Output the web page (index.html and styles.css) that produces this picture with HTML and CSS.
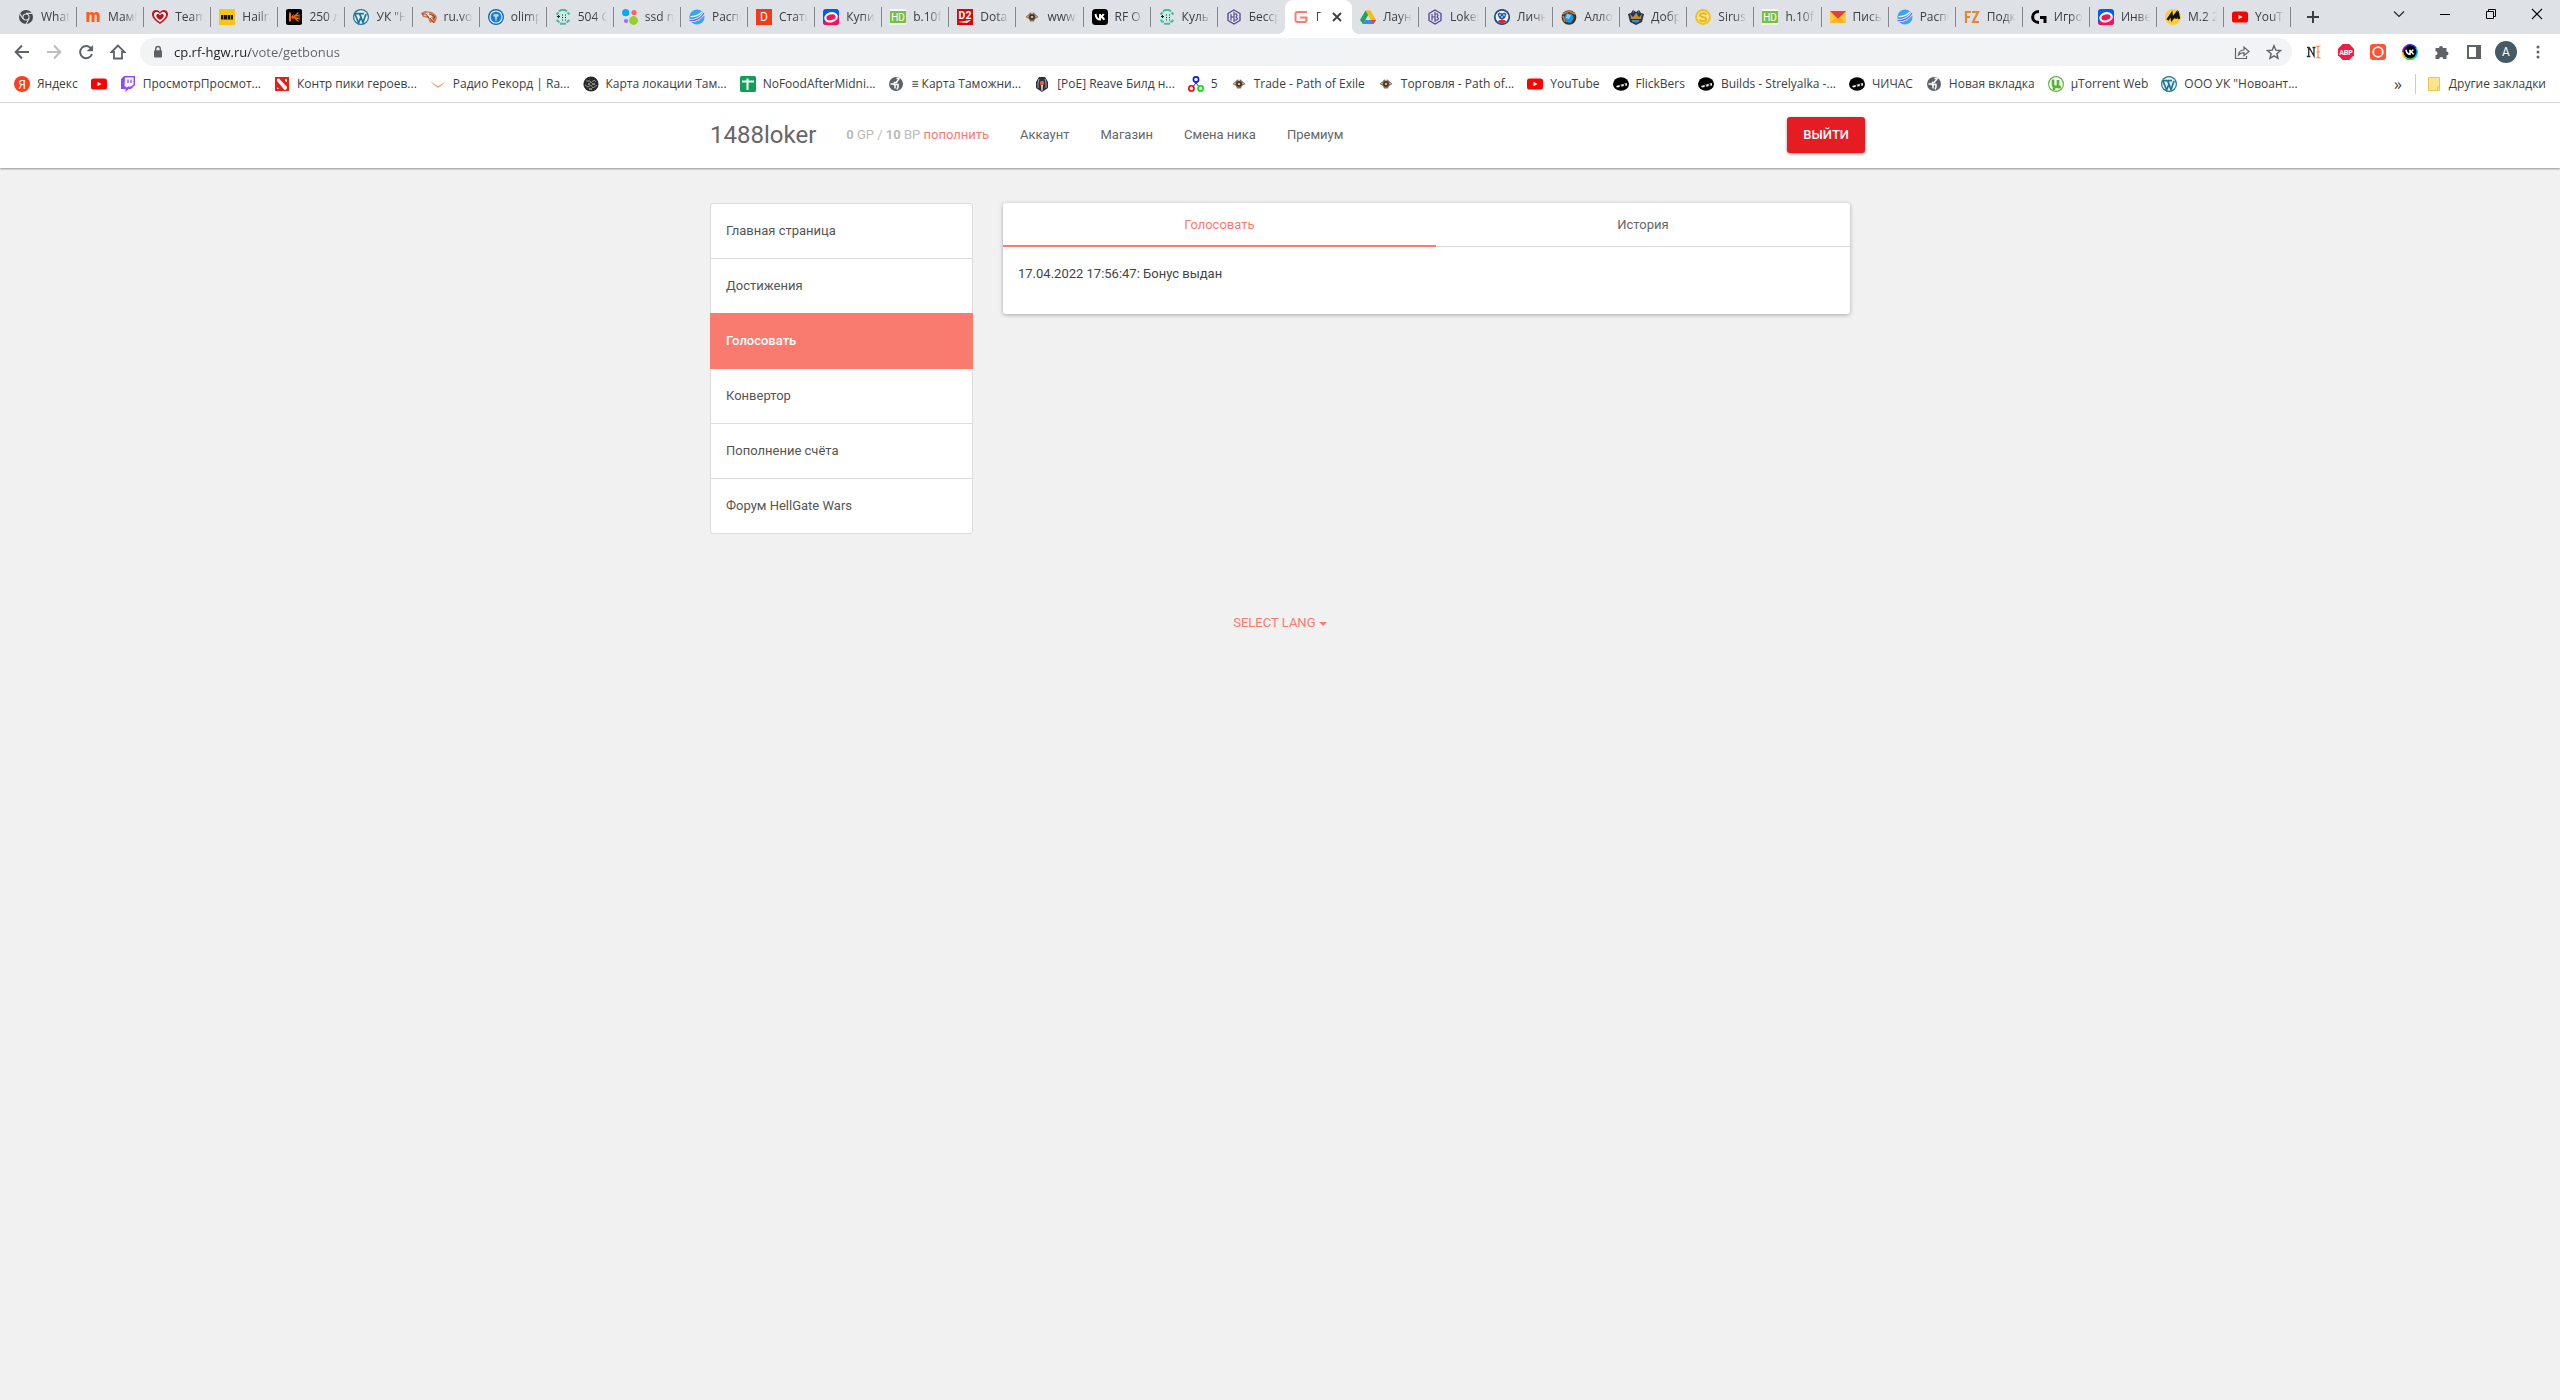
FILE: index.html
```html
<!DOCTYPE html>
<html lang="ru">
<head>
    <meta charset="UTF-8">
    <meta name="viewport" content="width=device-width, initial-scale=1.0">
    <title>Панель управления</title>
    <link rel="stylesheet" href="styles.css">
</head>
<body>
    <!-- icon sprite -->
    <svg class="sprite" aria-hidden="true">
        <symbol id="chrome" viewBox="0 0 16 16"><circle cx="8" cy="8" r="7" fill="#46494d"/><circle cx="8" cy="8" r="3.6" fill="#dee1e6"/><circle cx="8" cy="8" r="2.5" fill="#46494d"/><path d="M8 4.4h6.4M4.9 9.8 1.8 4.6M11.1 9.8 8 15" stroke="#dee1e6" stroke-width="1.1"/></symbol>
        <symbol id="mamba" viewBox="0 0 16 16"><path d="M1.4 13V3h2.8v1C6 2.500 8 2.800 8.900 4.100c1.600-1.800 5.700-1.600 5.700 2V13h-2.900V6.800c0-1.700-2.200-1.700-2.200 0V13H6.600V6.800c0-1.700-2.300-1.700-2.300 0V13z" fill="#ff5c1a"/></symbol>
        <symbol id="heart" viewBox="0 0 16 16"><path d="M8 15C2 11 0 8 0 5c0-4.500 5.500-5.500 8-2 2.500-3.500 8-2.500 8 2 0 3-2 6-8 10z" fill="#c41219"/><path d="M8 13C3.500 10 2 8 2 5.500c0-3 4-3.500 6-.5 2-3 6-2.500 6 .5C14 8 12.500 10 8 13z" fill="#fff"/><path d="M8 11C5 9 4.200 8 4.200 6.500 4.200 4.500 7 4.300 8 6.300c1-2 3.800-1.800 3.800.2C11.800 8 11 9 8 11z" fill="#c41219"/></symbol>
        <symbol id="imdb" viewBox="0 0 16 16"><path d="M0 0h16v16H0z" fill="#f5c518"/><path d="M2 6h12v4.500H2z" fill="#111"/><path d="M4.500 6v4.500M8.500 6v4.500M11.500 6v4.500" stroke="#f5c518" stroke-width=".6"/></symbol>
        <symbol id="ke" viewBox="0 0 16 16"><rect width="16" height="16" rx="2"/><path d="M3 3.500h2v9H3zM5 8l2.500-3v6z" fill="#ff6a13"/><path d="m7.500 8 5-4.500M7.500 8l5 4.500M8 8h6M8 7l6-1M8 9l6 1" stroke="#ff6a13" stroke-width="1.100"/></symbol>
        <symbol id="wp" viewBox="0 0 16 16"><circle cx="8" cy="8" r="8" fill="#21759b"/><circle cx="8" cy="8" r="6.800" fill="#e8f1f5"/><path d="m2 5 3.600 9L8 8 6.500 4M6.500 4.500 10 13.500l3-8.500M1.800 4.600h5M6 4.600h5" fill="none" stroke="#21759b" stroke-width="1.700"/></symbol>
        <symbol id="volcano" viewBox="0 0 16 16"><path d="M0 4 4 2l7 1 4 3 1 3-2 5-3-1-2 1-2-5-5-1z" fill="#d8794c"/><path d="m2 4.500 5-1 5 3-2 2 3 3-3-.5-3-4-4-.5z" fill="#f6e6c4"/><path d="M1 5h4l3 4M8 5l5 2M9 9l4 5M14 7l-2 4" fill="none" stroke="#5e3b46" stroke-width=".9"/></symbol>
        <symbol id="olimp" viewBox="0 0 16 16"><circle cx="8" cy="8" r="8" fill="#1767b5"/><circle cx="8" cy="8" r="6.600" fill="#fff"/><circle cx="8" cy="8" r="5.500" fill="#1b7cd1"/><path d="M6 5h4l1 2-2 1-.5 4h-1L7 8 5 7z" fill="#a8d8ff"/></symbol>
        <symbol id="cult" viewBox="0 0 16 16"><path d="M4 3h8v10H4zM1 6h14v5H1z" fill="#c9ece5"/><path d="M4 2.500 6 1h4l2 1.500M12.500 3.500 14.500 5.500M3.500 3.500 1.500 5.500M1.500 11l3 2.500M14.500 11l-3 2.500M5 14.800h6" fill="none" stroke="#4eb6a4" stroke-width="1.900"/><path d="M2 7.500h3M3.500 6v3M7 6h1M10 6h1M7 8.500h1M10 8.500h1M7 11h1M10 11h1" stroke="#222" stroke-width="1"/></symbol>
        <symbol id="avito" viewBox="0 0 16 16"><circle cx="3.700" cy="3.700" r="3.600" fill="#00aaff"/><circle cx="12" cy="3.600" r="2.600" fill="#ff6163"/><circle cx="4" cy="12" r="2.100" fill="#a169f7"/><circle cx="11.600" cy="11.500" r="4.400" fill="#97cf26"/></symbol>
        <symbol id="planet" viewBox="0 0 16 16"><circle cx="8" cy="8" r="7.600" fill="#38a5f5"/><path d="M1.500 7.500C6 8 11 5.500 13 3" fill="none" stroke="#e8f4ff" stroke-width="1.300"/><path d="M.5 11.500C6 12.500 13 8.500 15 4" fill="none" stroke="#e8f4ff" stroke-width="3"/><path d="M.5 11.500C6 12.500 13 8.500 15 4" fill="none" stroke="#8b5be8" stroke-width="1.300"/></symbol>
        <symbol id="d" viewBox="0 0 16 16"><path d="M0 0h16v16H0z" fill="#f03a1c"/><text x="8" y="12" class="glyph white" font-size="12">D</text></symbol>
        <symbol id="ozon" viewBox="0 0 16 16"><rect width="16" height="16" rx="3" fill="#005bff"/><path d="M0 13 16 7v6a3 3 0 0 1-3 3H3a3 3 0 0 1-3-3z" fill="#f91155"/><ellipse cx="8" cy="8.300" rx="5.800" ry="4" transform="rotate(-15 8 8.300)" fill="#f91155" stroke="#fff" stroke-width="2.200"/></symbol>
        <symbol id="hd" viewBox="0 0 16 16"><path d="M0 0h16v16H0z" fill="#f4f8ee"/><path d="M0 2h16v12H0z" fill="#77c043"/><text x="8" y="12" class="glyph white" font-size="10">HD</text></symbol>
        <symbol id="d2" viewBox="0 0 16 16"><path d="M0 0h16v16H0z" fill="#cf0a0f"/><text x="8" y="9.500" class="glyph white bold" font-size="10.500">D2</text><path d="m1 13 13-2-4 3z" fill="#fff"/></symbol>
        <symbol id="poe" viewBox="0 0 16 16"><path d="m1.500 8 3.500-3 1-1.500L8 4l2-.5L11 5l3.500 3L11 10l-1 2.500H6L5 10z" fill="#85705a"/><circle cx="8" cy="8" r="2.700" fill="#3a2a22"/><circle cx="8" cy="8" r="1.300" fill="#d9b98c"/><path d="m3 8 2-1M11 7l2 1M7 4.500h2" stroke="#cbb798"/></symbol>
        <symbol id="vk" viewBox="0 0 16 16"><rect width="16" height="16" rx="3.500"/><path d="M3.500 5c.5 3.500 2 5.600 4.500 5.600V5M8 7.800c2-.2 3-1.300 3.700-2.800M8 7.800c2.500.2 3.500 1.400 4.200 3" fill="none" stroke="#fff" stroke-width="1.900"/></symbol>
        <symbol id="hexa" viewBox="0 0 16 16"><path d="m8 1 6 3.500v7L8 15l-6-3.500v-7z" fill="#e4e2f2" stroke="#4d4393" stroke-width="1.300"/><path d="M5 5v6.500M5 8h3M8 3v10M8 5h2.500l.5 1.500L10 8l1.500 1.500L10.500 11H8" fill="none" stroke="#4d4393" stroke-width="1.100"/></symbol>
        <symbol id="g" viewBox="0 0 16 16"><path d="M14 3H4.500C3 3 2.500 4 2.500 5v6c0 1.500 1 2 2 2h7c1.300 0 2-.7 2-2V8.500H7" fill="none" stroke="#f97b70" stroke-width="2"/></symbol>
        <symbol id="drive" viewBox="0 0 16 16"><path d="M5.500 1.500h5L16 11h-5z" fill="#fbbc04"/><path d="m5.500 1.500 2.700 4.600L3 15 0 11z" fill="#1ea362"/><path d="M5 11h11l-2.700 4H2.500z" fill="#4285f4"/><path d="M11 11h5l-2.700 4z" fill="#ea4335"/></symbol>
        <symbol id="fifa" viewBox="0 0 16 16"><circle cx="8" cy="8" r="7.200" fill="#f4f4f4" stroke="#1c4e8c" stroke-width="1.700"/><path d="M3.500 12.500a6.500 6.500 0 0 0 9 0l-2-1.500h-5z" fill="#d9262e"/><path d="m3.500 5 2-1.500 2.500 1 2.500-1 2 1.500-1.500 4L8 11 5 9z" fill="#24599d"/><path d="M5 6h2M9 6h2M8 7v2" stroke="#fff"/></symbol>
        <symbol id="allods" viewBox="0 0 16 16"><circle cx="8" cy="8.500" r="7.300" fill="#4b2c19"/><path d="m3 8 3-4 5 1 2 4-3 5-5-1z" fill="#1a94e8"/><path d="m6 5 4 1-2 4-3-1z" fill="#7cd3ff"/><path d="m2 5 6-3 6 3M2 7l2 6" fill="none" stroke="#c98032" stroke-width="1.500"/></symbol>
        <symbol id="royal" viewBox="0 0 16 16"><path d="m0 5 3-1 2-3 3 2 3-2 2 3 3 1-2 8-6 3-6-3z" fill="#27344c"/><path d="m2 5 3 3 3-4 3 4 3-3-1 5H3z" fill="#c18a31"/><path d="M3 11h10l-5 4z" fill="#255aa8"/><path d="M5 3h1M10 3h1M8 5h1M4 12h7" stroke="#62c7c2"/></symbol>
        <symbol id="sirus" viewBox="0 0 16 16"><circle cx="8" cy="8" r="7" fill="#f9e48e" stroke="#eebf22" stroke-width="1.800"/><path d="M11.500 5.500C9 3.500 5 4 5 6.300c0 2.500 6.300 1 6.300 3.700C11.300 12.500 7 13 4.500 10.800" fill="none" stroke="#e5b415" stroke-width="1.800"/></symbol>
        <symbol id="mail" viewBox="0 0 16 16"><path d="M0 2h16v12H0z" fill="#ffcb3d"/><path d="M0 2h16L8 10z" fill="#f4392f"/><path d="m0 14 6-6 2 2 2-2 6 6z" fill="#ffb525"/></symbol>
        <symbol id="fz" viewBox="0 0 16 16"><path d="M7 3H2v11M2 8h4M8 3h6L9 13h6" fill="none" stroke="#e08936" stroke-width="2.200"/></symbol>
        <symbol id="logi" viewBox="0 0 16 16"><path d="M8 2.500C-.5 2.500-.5 13.500 8 13.500M9 8.500h5V14" fill="none" stroke="#000" stroke-width="3"/></symbol>
        <symbol id="market" viewBox="0 0 16 16"><circle cx="8" cy="8" r="8" fill="#fc3"/><path d="m2.500 11 4-6L7 10l4-5-.5 4.500L13 5l1 5" fill="none" stroke="#111" stroke-width="2.500"/></symbol>
        <symbol id="youtube" viewBox="0 0 16 16"><rect y="2.500" width="16" height="11" rx="2.600" fill="#f00"/><path d="m6.500 5.700 4 2.300-4 2.300z" fill="#fff"/></symbol>
        <symbol id="yandex" viewBox="0 0 16 16"><circle cx="8" cy="8" r="8" fill="#fc3f1d"/><text x="8" y="12.500" class="glyph white" font-size="12">Я</text></symbol>
        <symbol id="twitch" viewBox="0 0 16 16"><path d="M4 0h11v9l-4 4H8.500L5.500 16v-3H1V3z" fill="#9147ff"/><path d="M5 1.500h8.500v7l-2.500 2H8L6.500 12v-1.500H4.500z" fill="#fff"/><path d="M8 3.500v3.500M11 3.500v3.500" stroke="#9147ff" stroke-width="1.300"/></symbol>
        <symbol id="dota" viewBox="0 0 16 16"><path d="M1 1h14v14H1z" fill="#e42019"/><path d="m3 3 2-.5 8 8.500-.5 2.500-2 .5L3 5zM11 3l2 .5V6l-2-1zM3 11l2 2H3z" fill="#fff"/></symbol>
        <symbol id="record" viewBox="0 0 16 16"><path d="m0 5 6 4 2 1 2-1 6-4-5 5-3 2-3-2z" fill="#f0a98b"/></symbol>
        <symbol id="photo" viewBox="0 0 16 16"><circle cx="8" cy="8" r="7.600" fill="#292929"/><path d="M3 5h4l1 2 3-3 2 2M2 9l3 2 3-2 2 3 4-3" fill="none" stroke="#96928b"/><path d="M5 8h2M9 8h3M6 13h3" stroke="#ddd"/></symbol>
        <symbol id="sheet" viewBox="0 0 16 16"><rect width="16" height="16" rx="1.500" fill="#129d58"/><path d="M2 5.500h12M7.500 2.500V14" stroke="#fff" stroke-width="2"/></symbol>
        <symbol id="globe" viewBox="0 0 16 16"><circle cx="8" cy="8" r="7" fill="#5f6368"/><path d="M8.500 2.500H11c0 2-2.500 2-2.500 4H6.500v2H10v2.500l-1 2.500M2.500 8h3l1.500 1.500v3" fill="none" stroke="#fff" stroke-width="1.500"/></symbol>
        <symbol id="ship" viewBox="0 0 16 16"><path d="M5 1h6l3 5v6l-3 2-3 2-3-2-3-2V6z" fill="#332f39"/><path d="M5 3 4 7v5M11 3l1 4v5" fill="none" stroke="#aaa5ae"/><circle cx="8" cy="7" r="2.200" fill="#d86742"/><path d="M7 9h2l-.5 6h-1z" fill="#ddd"/></symbol>
        <symbol id="rgb" viewBox="0 0 16 16"><path d="m8 7-4 5M8 7l4 5" stroke="#333"/><g fill="#fff" stroke-width="1.600"><circle cx="8" cy="3.500" r="2.600" stroke="#11f"/><circle cx="3.400" cy="12.400" r="2.600" stroke="#f00"/><circle cx="12.600" cy="12.400" r="2.600" stroke="#0d0"/></g></symbol>
        <symbol id="ninja" viewBox="0 0 16 16"><ellipse cx="8" cy="8" rx="8" ry="6.800"/><path d="M3 10 14 7v2.500L4 11.500z" fill="#f2f2f2"/><circle cx="7.500" cy="9.900" r="1"/><circle cx="11.500" cy="8.900" r="1"/></symbol>
        <symbol id="utorrent" viewBox="0 0 16 16"><circle cx="8" cy="8" r="7.400" fill="#fff" stroke="#62b544" stroke-width="1.200"/><path d="M5 3.500v5c0 3 4.500 3 5.500.5M10 4v5.500c0 1.500 1 2 3 1.500M6 10v4" fill="none" stroke="#58b531" stroke-width="2.700"/></symbol>
        <symbol id="folder" viewBox="0 0 16 16"><path d="M2.500 1.500h11v9.800h-2V14.500h-9z" fill="#ffe58f" stroke="#edc64b"/><path d="M11.500 14.500v-3.700h2v3.700z" fill="#ffe58f" stroke="#edc64b"/></symbol>
        <symbol id="back" viewBox="0 0 16 16"><path d="M15 8H2M8 1.500 1.700 8 8 14.500" fill="none" stroke="currentColor" stroke-width="2"/></symbol>
        <symbol id="forward" viewBox="0 0 16 16"><path d="M1 8h13M8 1.500 14.300 8 8 14.500" fill="none" stroke="currentColor" stroke-width="2"/></symbol>
        <symbol id="reload" viewBox="0 0 16 16"><path d="M13.300 4.700A6.100 6.100 0 1 0 14 10" fill="none" stroke="currentColor" stroke-width="2"/><path d="M15 1v6.300H8.700z" fill="currentColor"/></symbol>
        <symbol id="home" viewBox="0 0 16 16"><path d="M8 1.500 1.500 8H4v6.500h8V8h2.500z" fill="none" stroke="currentColor" stroke-width="1.800"/></symbol>
        <symbol id="lock" viewBox="0 0 16 16"><rect x="4" y="6.300" width="8" height="7.200" rx="1" fill="currentColor"/><path d="M5.700 7V4.800a2.300 2.300 0 0 1 4.600 0V7" fill="none" stroke="currentColor" stroke-width="1.400"/></symbol>
        <symbol id="share" viewBox="0 0 16 16"><path d="M1.500 4v10.500h11V12M4.500 11c.3-3.500 2.500-5 5.500-5V3l5 4.500-5 4V8.700C7.500 8.700 6 9.200 4.500 11z" fill="none" stroke="currentColor" stroke-width="1.200"/></symbol>
        <symbol id="star" viewBox="0 0 16 16"><path d="m8 1.800 1.800 4.400 4.700.4-3.600 3.100 1.100 4.600L8 11.800l-4 2.500 1.100-4.600-3.600-3.100 4.700-.4z" fill="none" stroke="currentColor" stroke-width="1.400"/></symbol>
        <symbol id="ni" viewBox="0 0 16 16"><path d="M1 3.500h2.200L8 12V3.500M2.700 3.500v9M.8 12.500h3.600M6.500 3.500h3" fill="none" stroke="#2d2d2d" stroke-width="1.300"/><path d="M10 2c1.500 0 2 .5 2 1.500v9c0 1-.5 1.500-2 1.500M14.500 2c-1.500 0-2.500.5-2.500 1.500M12 12.500c0 1 1 1.500 2.500 1.500M10.500 8H14" fill="none" stroke="#f58b4a" stroke-width="1.200"/></symbol>
        <symbol id="abp" viewBox="0 0 16 16"><path d="M4.700 0h6.600L16 4.700v6.600L11.300 16H4.700L0 11.300V4.700z" fill="#ed1e45"/><text x="8" y="10.700" class="glyph white bold" font-size="7">ABP</text></symbol>
        <symbol id="ring" viewBox="0 0 16 16"><rect width="16" height="16" rx="3" fill="#ff5334"/><circle cx="8" cy="8" r="4.800" fill="none" stroke="#fff" stroke-width="1.800"/></symbol>
        <symbol id="vkcolor" viewBox="0 0 16 16"><g fill="none" stroke-width="2"><path d="M1 8a7 7 0 0 1 3.500-6" stroke="#c0f"/><path d="M4.500 2A7 7 0 0 1 14 4.500" stroke="#32f"/><path d="M14 4.500A7 7 0 0 1 12 14" stroke="#0cf"/><path d="M12 14a7 7 0 0 1-8 0" stroke="#3d3"/><path d="M4 14a7 7 0 0 1-3-6" stroke="#fb0"/></g><circle cx="8" cy="8" r="6.500"/><path d="M4 5.700c.4 3 1.500 4.600 4 4.600V5.700M8 8c1.500-.2 2.500-1 3.300-2.300M8 8c2 .2 3 1 3.600 2.400" fill="none" stroke="#fff" stroke-width="1.600"/></symbol>
        <symbol id="puzzle" viewBox="0 0 16 16"><path d="M1.500 4H5a2 2 0 1 1 4 0h3.500v3.500a2 2 0 1 1 0 4V15H9.200a2 2 0 1 0-4 0H1.500v-3.700a2 2 0 1 0 0-4z" fill="currentColor"/></symbol>
        <symbol id="panel" viewBox="0 0 16 16"><path d="M2 2h12v12H2z" fill="none" stroke="currentColor" stroke-width="2"/><path d="M10 2h4v12h-4z" fill="currentColor"/></symbol>
        <symbol id="dots" viewBox="0 0 16 16"><g fill="currentColor"><circle cx="8" cy="3" r="1.500"/><circle cx="8" cy="8" r="1.500"/><circle cx="8" cy="13" r="1.500"/></g></symbol>
        <symbol id="plus" viewBox="0 0 16 16"><path d="M8 2v12M2 8h12" stroke="#3c4043" stroke-width="2"/></symbol>
        <symbol id="cross" viewBox="0 0 16 16"><path d="m4 4 8 8m0-8-8 8" stroke="#3c4043" stroke-width="1.800"/></symbol>
        <symbol id="chevron" viewBox="0 0 16 16"><path d="m3 5.500 5 5 5-5" fill="none" stroke="#222" stroke-width="1.100"/></symbol>
        <symbol id="minimize" viewBox="0 0 16 16"><path d="M3 8.500h10" stroke="#000"/></symbol>
        <symbol id="restore" viewBox="0 0 16 16"><path d="M3.500 5.500h7v7h-7zM5.500 5.500v-2h7v7h-2" fill="none" stroke="#000"/></symbol>
        <symbol id="close" viewBox="0 0 16 16"><path d="m3 3 10 10m0-10L3 13" stroke="#000" stroke-width="1.100"/></symbol>
    </svg>

    <div class="browser">
        <div class="tabstrip">
            <div class="tabs">
                <button class="tab"><svg><use href="#chrome"/></svg><span>What</span></button>
                <button class="tab"><svg><use href="#mamba"/></svg><span>Мамб</span></button>
                <button class="tab"><svg><use href="#heart"/></svg><span>Team</span></button>
                <button class="tab"><svg><use href="#imdb"/></svg><span>Hailra</span></button>
                <button class="tab"><svg><use href="#ke"/></svg><span>250 л</span></button>
                <button class="tab"><svg><use href="#wp"/></svg><span>УК "Н</span></button>
                <button class="tab"><svg><use href="#volcano"/></svg><span>ru.vo</span></button>
                <button class="tab"><svg><use href="#olimp"/></svg><span>olimp</span></button>
                <button class="tab"><svg><use href="#cult"/></svg><span>504 G</span></button>
                <button class="tab"><svg><use href="#avito"/></svg><span>ssd n</span></button>
                <button class="tab"><svg><use href="#planet"/></svg><span>Распи</span></button>
                <button class="tab"><svg><use href="#d"/></svg><span>Стати</span></button>
                <button class="tab"><svg><use href="#ozon"/></svg><span>Купи</span></button>
                <button class="tab"><svg><use href="#hd"/></svg><span>b.10f</span></button>
                <button class="tab"><svg><use href="#d2"/></svg><span>Dota</span></button>
                <button class="tab"><svg><use href="#poe"/></svg><span>www.</span></button>
                <button class="tab"><svg><use href="#vk"/></svg><span>RF O</span></button>
                <button class="tab"><svg><use href="#cult"/></svg><span>Культ</span></button>
                <button class="tab no-line"><svg><use href="#hexa"/></svg><span>Бесср</span></button>
                <button class="tab active"><svg><use href="#g"/></svg><span>П</span><svg><use href="#cross"/></svg></button>
                <button class="tab"><svg><use href="#drive"/></svg><span>Лаун</span></button>
                <button class="tab"><svg><use href="#hexa"/></svg><span>Loker</span></button>
                <button class="tab"><svg><use href="#fifa"/></svg><span>Личн</span></button>
                <button class="tab"><svg><use href="#allods"/></svg><span>Алло</span></button>
                <button class="tab"><svg><use href="#royal"/></svg><span>Добр</span></button>
                <button class="tab"><svg><use href="#sirus"/></svg><span>Sirus.</span></button>
                <button class="tab"><svg><use href="#hd"/></svg><span>h.10f</span></button>
                <button class="tab"><svg><use href="#mail"/></svg><span>Пись</span></button>
                <button class="tab"><svg><use href="#planet"/></svg><span>Распи</span></button>
                <button class="tab"><svg><use href="#fz"/></svg><span>Подк</span></button>
                <button class="tab"><svg><use href="#logi"/></svg><span>Игро</span></button>
                <button class="tab"><svg><use href="#ozon"/></svg><span>Инве</span></button>
                <button class="tab"><svg><use href="#market"/></svg><span>M.2 2</span></button>
                <button class="tab"><svg><use href="#youtube"/></svg><span>YouTu</span></button>
            </div>
            <button class="new-tab" aria-label="Новая вкладка"><svg><use href="#plus"/></svg></button>
            <div class="window-controls">
                <button aria-label="Поиск вкладок"><svg><use href="#chevron"/></svg></button>
                <button aria-label="Свернуть"><svg><use href="#minimize"/></svg></button>
                <button aria-label="Восстановить"><svg><use href="#restore"/></svg></button>
                <button aria-label="Закрыть"><svg><use href="#close"/></svg></button>
            </div>
        </div>

        <div class="toolbar">
            <button class="tool" aria-label="Назад"><svg><use href="#back"/></svg></button>
            <button class="tool disabled" aria-label="Вперед"><svg><use href="#forward"/></svg></button>
            <button class="tool" aria-label="Обновить"><svg><use href="#reload"/></svg></button>
            <button class="tool" aria-label="Главная"><svg><use href="#home"/></svg></button>
            <div class="omnibox">
                <svg><use href="#lock"/></svg>
                <input type="text" value="cp.rf-hgw.ru/vote/getbonus" aria-label="Адресная строка">
                <button class="tool" aria-label="Поделиться"><svg><use href="#share"/></svg></button>
                <button class="tool" aria-label="Добавить в закладки"><svg><use href="#star"/></svg></button>
            </div>
            <button class="tool" aria-label="Заметки"><svg><use href="#ni"/></svg></button>
            <button class="tool" aria-label="Adblock Plus"><svg><use href="#abp"/></svg></button>
            <button class="tool" aria-label="Запись"><svg><use href="#ring"/></svg></button>
            <button class="tool" aria-label="VK"><svg><use href="#vkcolor"/></svg></button>
            <button class="tool" aria-label="Расширения"><svg><use href="#puzzle"/></svg></button>
            <button class="tool" aria-label="Боковая панель"><svg><use href="#panel"/></svg></button>
            <button class="tool"><span class="avatar">A</span></button>
            <button class="tool" aria-label="Меню"><svg><use href="#dots"/></svg></button>
        </div>

        <div class="bookmarks">
            <a href="#"><svg><use href="#yandex"/></svg>Яндекс</a>
            <a href="#" aria-label="YouTube"><svg><use href="#youtube"/></svg></a>
            <a href="#"><svg><use href="#twitch"/></svg>ПросмотрПросмот...</a>
            <a href="#"><svg><use href="#dota"/></svg>Контр пики героев...</a>
            <a href="#"><svg><use href="#record"/></svg>Радио Рекорд | Ra...</a>
            <a href="#"><svg><use href="#photo"/></svg>Карта локации Там...</a>
            <a href="#"><svg><use href="#sheet"/></svg>NoFoodAfterMidni...</a>
            <a href="#"><svg><use href="#globe"/></svg>≡ Карта Таможни...</a>
            <a href="#"><svg><use href="#ship"/></svg>[PoE] Reave Билд н...</a>
            <a href="#"><svg><use href="#rgb"/></svg>5</a>
            <a href="#"><svg><use href="#poe"/></svg>Trade - Path of Exile</a>
            <a href="#"><svg><use href="#poe"/></svg>Торговля - Path of...</a>
            <a href="#"><svg><use href="#youtube"/></svg>YouTube</a>
            <a href="#"><svg><use href="#ninja"/></svg>FlickBers</a>
            <a href="#"><svg><use href="#ninja"/></svg>Builds - Strelyalka -...</a>
            <a href="#"><svg><use href="#ninja"/></svg>ЧИЧАС</a>
            <a href="#"><svg><use href="#globe"/></svg>Новая вкладка</a>
            <a href="#"><svg><use href="#utorrent"/></svg>µTorrent Web</a>
            <a href="#"><svg><use href="#wp"/></svg>ООО УК "Новоант...</a>
            <button class="more">»</button>
            <a href="#" class="other"><svg><use href="#folder"/></svg>Другие закладки</a>
        </div>
    </div>

    <header class="header">
        <div class="header-inner">
            <a href="#" class="brand">1488loker</a>
            <p class="balance"><b>0</b> GP / <b>10</b> BP <a href="#">пополнить</a></p>
            <nav class="nav">
                <a href="#">Аккаунт</a>
                <a href="#">Магазин</a>
                <a href="#">Смена ника</a>
                <a href="#">Премиум</a>
            </nav>
            <button class="btn-logout">ВЫЙТИ</button>
        </div>
    </header>

    <main class="container">
        <nav class="menu">
            <a href="#">Главная страница</a>
            <a href="#">Достижения</a>
            <a href="#" class="active">Голосовать</a>
            <a href="#">Конвертор</a>
            <a href="#">Пополнение счёта</a>
            <a href="#">Форум HellGate Wars</a>
        </nav>
        <section class="card">
            <div class="card-tabs">
                <a href="#" class="active">Голосовать</a>
                <a href="#">История</a>
            </div>
            <p class="card-body">17.04.2022 17:56:47: Бонус выдан</p>
        </section>
    </main>

    <footer class="footer">
        <button class="lang">SELECT LANG <span class="caret"></span></button>
    </footer>
</body>
</html>
```

FILE: styles.css
```css
* {
    box-sizing: border-box;
}
body {
    margin: 0;
    min-height: 100vh;
    background: #f1f1f1;
    color: #555;
    font-family: Roboto, sans-serif;
    font-size: 13px;
    line-height: 20px;
}
a {
    color: inherit;
    text-decoration: none;
}
p {
    margin: 0;
}
button {
    border: 0;
    padding: 0;
    background: none;
    color: inherit;
    font: inherit;
    cursor: pointer;
}
svg {
    display: block;
    flex: none;
    width: 16px;
    height: 16px;
}
.sprite {
    position: absolute;
    width: 0;
    height: 0;
}
.glyph {
    font-family: Roboto, sans-serif;
    text-anchor: middle;
}
.white {
    fill: #fff;
}
.bold {
    font-weight: bold;
}

/* browser window */
.browser {
    background: #fff;
    border-bottom: 1px solid #d9d9d9;
    color: #3c4043;
    font-family: "Open Sans", sans-serif;
    font-size: 12px;
}
.tabstrip {
    display: flex;
    height: 34px;
    padding-left: 10px;
    background: #dee1e6;
}
.tabs {
    display: flex;
    flex: 1;
    min-width: 0;
}
.tab {
    position: relative;
    display: flex;
    flex: 1 1 0;
    align-items: center;
    gap: 7px;
    min-width: 0;
    padding: 0 7px 0 8px;
}
.tab span {
    flex: 1;
    min-width: 0;
    overflow: hidden;
    white-space: nowrap;
    text-align: left;
    -webkit-mask-image: linear-gradient(to right, #000 55%, transparent);
    mask-image: linear-gradient(to right, #000 55%, transparent);
}
.tab::after {
    content: "";
    position: absolute;
    top: 7px;
    right: 0;
    width: 1px;
    height: 20px;
    background: #80868b;
}
.tab.no-line::after {
    display: none;
}
.tab.active {
    background: #fff;
    border-radius: 8px 8px 0 0;
}
.tab.active::before,
.tab.active::after {
    content: "";
    position: absolute;
    top: auto;
    bottom: 0;
    width: 8px;
    height: 8px;
}
.tab.active::before {
    left: -8px;
    background: radial-gradient(circle at 0 0, transparent 8px, #fff 8px);
}
.tab.active::after {
    right: -8px;
    background: radial-gradient(circle at 100% 0, transparent 8px, #fff 8px);
}
.new-tab {
    display: flex;
    align-items: center;
    justify-content: center;
    width: 44px;
    margin-right: 41px;
}
.window-controls {
    display: flex;
    height: 28px;
}
.window-controls button {
    display: flex;
    align-items: center;
    justify-content: center;
    width: 46px;
}
.toolbar {
    display: flex;
    align-items: center;
    height: 36px;
    padding: 0 6px;
    color: #5f6368;
}
.tool {
    display: flex;
    flex: none;
    align-items: center;
    justify-content: center;
    width: 32px;
    height: 28px;
}
.tool.disabled {
    color: #bbbdbf;
}
.omnibox {
    display: flex;
    flex: 1;
    align-items: center;
    height: 28px;
    margin: 0 6px;
    padding: 0 2px 0 10px;
    background: #f1f3f4;
    border-radius: 14px;
}
.omnibox input {
    flex: 1;
    min-width: 0;
    margin-left: 8px;
    padding: 0;
    border: 0;
    outline: 0;
    font-family: "Open Sans", sans-serif;
    font-size: 13px;
    color: transparent;
    background: linear-gradient(to right, #202124 76px, #5f6368 76px);
    -webkit-background-clip: text;
    background-clip: text;
}
.avatar {
    width: 22px;
    height: 22px;
    border-radius: 50%;
    background: #455a64;
    color: #fff;
    font-family: Roboto, sans-serif;
    line-height: 22px;
}
.bookmarks {
    display: flex;
    align-items: center;
    gap: 13px;
    height: 32px;
    padding: 0 14px 4px;
    white-space: nowrap;
}
.bookmarks a {
    display: flex;
    align-items: center;
    gap: 7px;
}
.more {
    margin-left: auto;
    font-size: 16px;
}
.bookmarks .other {
    padding-left: 10px;
    border-left: 1px solid #c8cacd;
}

/* site header */
.header {
    background: #fff;
    box-shadow: 0 1px 2px rgba(0, 0, 0, 0.4);
}
.header-inner {
    display: flex;
    align-items: center;
    max-width: 1170px;
    height: 65px;
    margin: 0 auto;
    padding: 0 0 1px 15px;
}
.brand {
    margin-right: 30px;
    color: #666;
    font-size: 24px;
}
.balance {
    margin-right: 16px;
    color: #bbb;
}
.balance a {
    color: #f97b70;
}
.nav {
    display: flex;
    gap: 1px;
    color: #666;
}
.nav a {
    padding: 0 15px;
}
.btn-logout {
    height: 36px;
    margin-left: auto;
    padding: 0 16px;
    background: #e61c23;
    border-radius: 3px;
    box-shadow: 0 1px 3px rgba(0, 0, 0, 0.4);
    color: #fff;
    font-weight: 500;
}

/* content */
.container {
    display: flex;
    align-items: flex-start;
    gap: 30px;
    max-width: 1140px;
    margin: 35px auto 0;
}
.menu {
    display: flex;
    flex: none;
    flex-direction: column;
    width: 263px;
}
.menu a {
    padding: 17px 15px;
    background: #fff;
    border: 1px solid #ddd;
}
.menu a + a {
    margin-top: -1px;
}
.menu a:first-child {
    border-radius: 3px 3px 0 0;
}
.menu a:last-child {
    border-radius: 0 0 3px 3px;
}
.menu .active {
    z-index: 1;
    background: #f97b70;
    border-color: #f97b70;
    color: #fff;
    font-weight: 500;
}
.card {
    flex: 1;
    background: #fff;
    border-radius: 3px;
    box-shadow: 0 1px 4px rgba(0, 0, 0, 0.3);
}
.card-tabs {
    display: flex;
    text-align: center;
    color: #666;
}
.card-tabs a {
    flex: 1 1 auto;
    height: 44px;
    padding-top: 12px;
    border-bottom: 1px solid #ddd;
}
.card-tabs .active {
    border-bottom: 2px solid #f97b70;
    color: #f97b70;
}
.card-body {
    padding: 17px 15px 30px;
    color: #444;
}
.footer {
    padding: 79px 0;
    text-align: center;
}
.lang {
    color: #f97b70;
}
.caret {
    display: inline-block;
    border: 4px solid transparent;
    border-top-color: currentColor;
    border-bottom: 0;
    vertical-align: middle;
}
```
